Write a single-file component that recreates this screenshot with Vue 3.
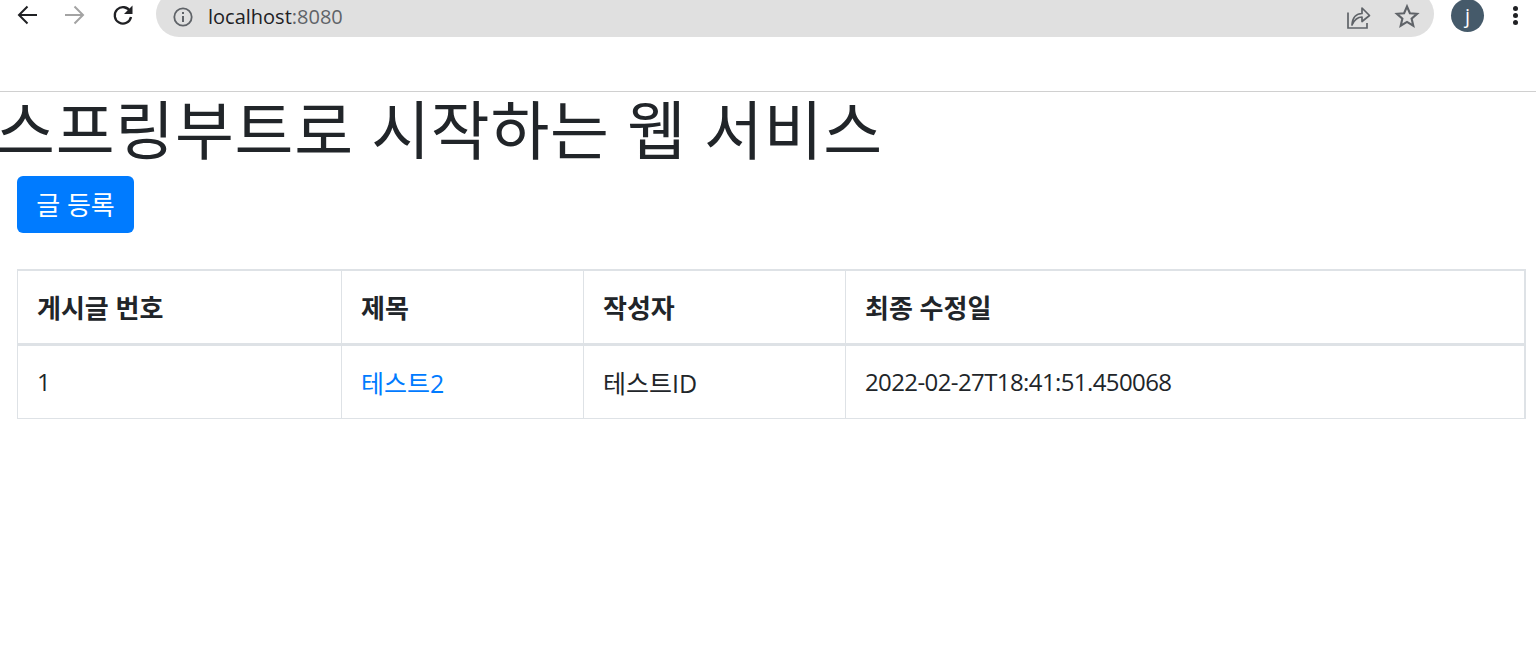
<template>
  <div class="page">
    <!-- 브라우저 툴바 -->
    <header class="toolbar">
      <button class="nav-btn" aria-label="back">
        <svg width="24" height="24" viewBox="0 0 24 24"><path d="M22 12H4M12.500 3.500 4 12l8.500 8.500" fill="none" stroke="#202124" stroke-width="2"/></svg>
      </button>
      <button class="nav-btn" aria-label="forward">
        <svg width="24" height="24" viewBox="0 0 24 24"><path d="M2 12h18M11.500 3.500 20 12l-8.500 8.500" fill="none" stroke="#a3a3a3" stroke-width="2"/></svg>
      </button>
      <button class="nav-btn" aria-label="reload">
        <svg width="24" height="24" viewBox="0 0 24 24"><path d="M19.200 8.500A8.200 8.200 0 1 0 20 14" fill="none" stroke="#202124" stroke-width="2.300"/><path d="M21.500 2.500v8.500H13z" fill="#202124"/></svg>
      </button>
      <div class="omnibox">
        <svg class="info" width="22" height="22" viewBox="0 0 22 22">
          <circle cx="11" cy="11" r="8.700" fill="none" stroke="#5f6368" stroke-width="1.800"/>
          <path d="M11 10v6M11 6v2" fill="none" stroke="#5f6368" stroke-width="2"/>
        </svg>
        <span class="url">localhost<span class="port">:8080</span></span>
        <svg class="share" width="26" height="26" viewBox="0 0 26 26">
          <path d="M3 8.500V24h19v-5" fill="none" stroke="#5f6368" stroke-width="1.700"/>
          <path d="M7 21c.5-7.500 4.500-11.500 10-11.500V4l7.500 7.500-7.500 6V13c-4.500 0-7.500 2.500-10 8z" fill="none" stroke="#5f6368" stroke-width="1.700" stroke-linejoin="round"/>
        </svg>
        <svg class="star" width="26" height="26" viewBox="0 0 26 26">
          <path d="m13 3.500 2.900 6.700 7.200.6-5.500 4.800 1.700 7.100-6.300-3.800-6.300 3.800 1.700-7.100-5.500-4.800 7.200-.6z" fill="none" stroke="#5f6368" stroke-width="2.100"/>
        </svg>
      </div>
      <div class="avatar">j</div>
      <div class="menu"><i></i><i></i><i></i></div>
    </header>

    <!-- 본문 -->
    <h1 class="title">스프링부트로 시작하는 웹 서비스</h1>
    <main class="content">
      <a class="btn-primary" href="#">글 등록</a>
      <table class="posts">
        <thead>
          <tr>
            <th v-for="col in columns" :key="col.label" :class="col.cls">{{ col.label }}</th>
          </tr>
        </thead>
        <tbody>
          <tr v-for="post in posts" :key="post.id">
            <td>{{ post.id }}</td>
            <td><a class="post-link" href="#">{{ post.title }}</a></td>
            <td class="author">{{ post.author }}</td>
            <td class="date">{{ post.modifiedDate }}</td>
          </tr>
        </tbody>
      </table>
    </main>
  </div>
</template>

<script setup>
const columns = [
  { label: '게시글 번호', cls: 'col-id' },
  { label: '제목', cls: 'col-title' },
  { label: '작성자', cls: 'col-author' },
  { label: '최종 수정일', cls: 'col-date' }
]

const posts = [
  { id: 1, title: '테스트2', author: '테스트ID', modifiedDate: '2022-02-27T18:41:51.450068' }
]
</script>

<style>
html, body {
  margin: 0;
  background: #fff;
}
</style>

<style scoped>
.page {
  height: 657px;
  overflow: hidden;
  font-family: "Open Sans", "Noto Sans CJK KR", sans-serif;
  font-size: 24px;
  color: #212529;
}

.toolbar {
  display: flex;
  align-items: flex-start;
  height: 92px;
  box-sizing: border-box;
  border-bottom: 1px solid #d0d0d0;
}

.nav-btn {
  width: 48px;
  height: 32px;
  padding: 3px 0 0;
  border: none;
  background: none;
  display: flex;
  justify-content: center;
}

.toolbar .nav-btn:first-child {
  margin-left: 3px;
}

.omnibox {
  width: 1278px;
  height: 46px;
  margin: -9px 0 0 9px;
  padding: 5px 14px 0 16px;
  box-sizing: border-box;
  border-radius: 23px;
  background: #e0e0e0;
  display: flex;
  align-items: center;
}

.info {
  margin-right: 14px;
}

.url {
  font-size: 20px;
  color: #202124;
  flex: 1;
}

.port {
  color: #5f6368;
}

.share {
  margin-right: 23px;
}

.star {
  margin-bottom: 2px;
}

.avatar {
  width: 33px;
  height: 33px;
  margin: -1px 0 0 17px;
  border-radius: 50%;
  background: #455a6a;
  color: #fff;
  font-size: 20px;
  display: flex;
  align-items: center;
  justify-content: center;
}

.menu {
  margin: 6px 0 0 29px;
  display: flex;
  flex-direction: column;
  gap: 2px;
}

.menu i {
  width: 5px;
  height: 5px;
  border-radius: 50%;
  background: #202124;
}

.title {
  margin: 0 0 0 -4px;
  height: 84px;
  font-size: 64px;
  letter-spacing: 0.75px;
  font-weight: 400;
  line-height: 76px;
  white-space: nowrap;
}

.content {
  padding: 0 10px 0 17px;
}

.btn-primary {
  display: inline-block;
  box-sizing: border-box;
  height: 57px;
  width: 117px;
  padding-top: 2px;
  line-height: 55px;
  text-align: center;
  background: #007bff;
  color: #fff;
  font-size: 26px;
  border-radius: 6px;
  text-decoration: none;
  vertical-align: top;
}

.posts {
  display: table;
  width: 1509px;
  margin-top: 36px;
  border-collapse: collapse;
  table-layout: fixed;
  border: 1px solid #dee2e6;
  border-top: 2px solid #dee2e6;
  border-right: 2px solid #dee2e6;
}

.posts th,
.posts td {
  box-sizing: border-box;
  text-align: left;
  padding: 0 19px;
  border: 1px solid #dee2e6;
  font-weight: 400;
}

.posts th {
  height: 74px;
  font-size: 26px;
  font-weight: 700;
  border-bottom: 3px solid #dee2e6;
}

.posts td {
  height: 74px;
}

.col-id {
  width: 324px;
}

.col-title {
  width: 242px;
}

.col-author {
  width: 262px;
}

.post-link {
  color: #007bff;
  font-size: 25px;
  text-decoration: none;
}

.author {
  font-size: 25px;
}

.date {
  letter-spacing: -0.6px;
}
</style>
